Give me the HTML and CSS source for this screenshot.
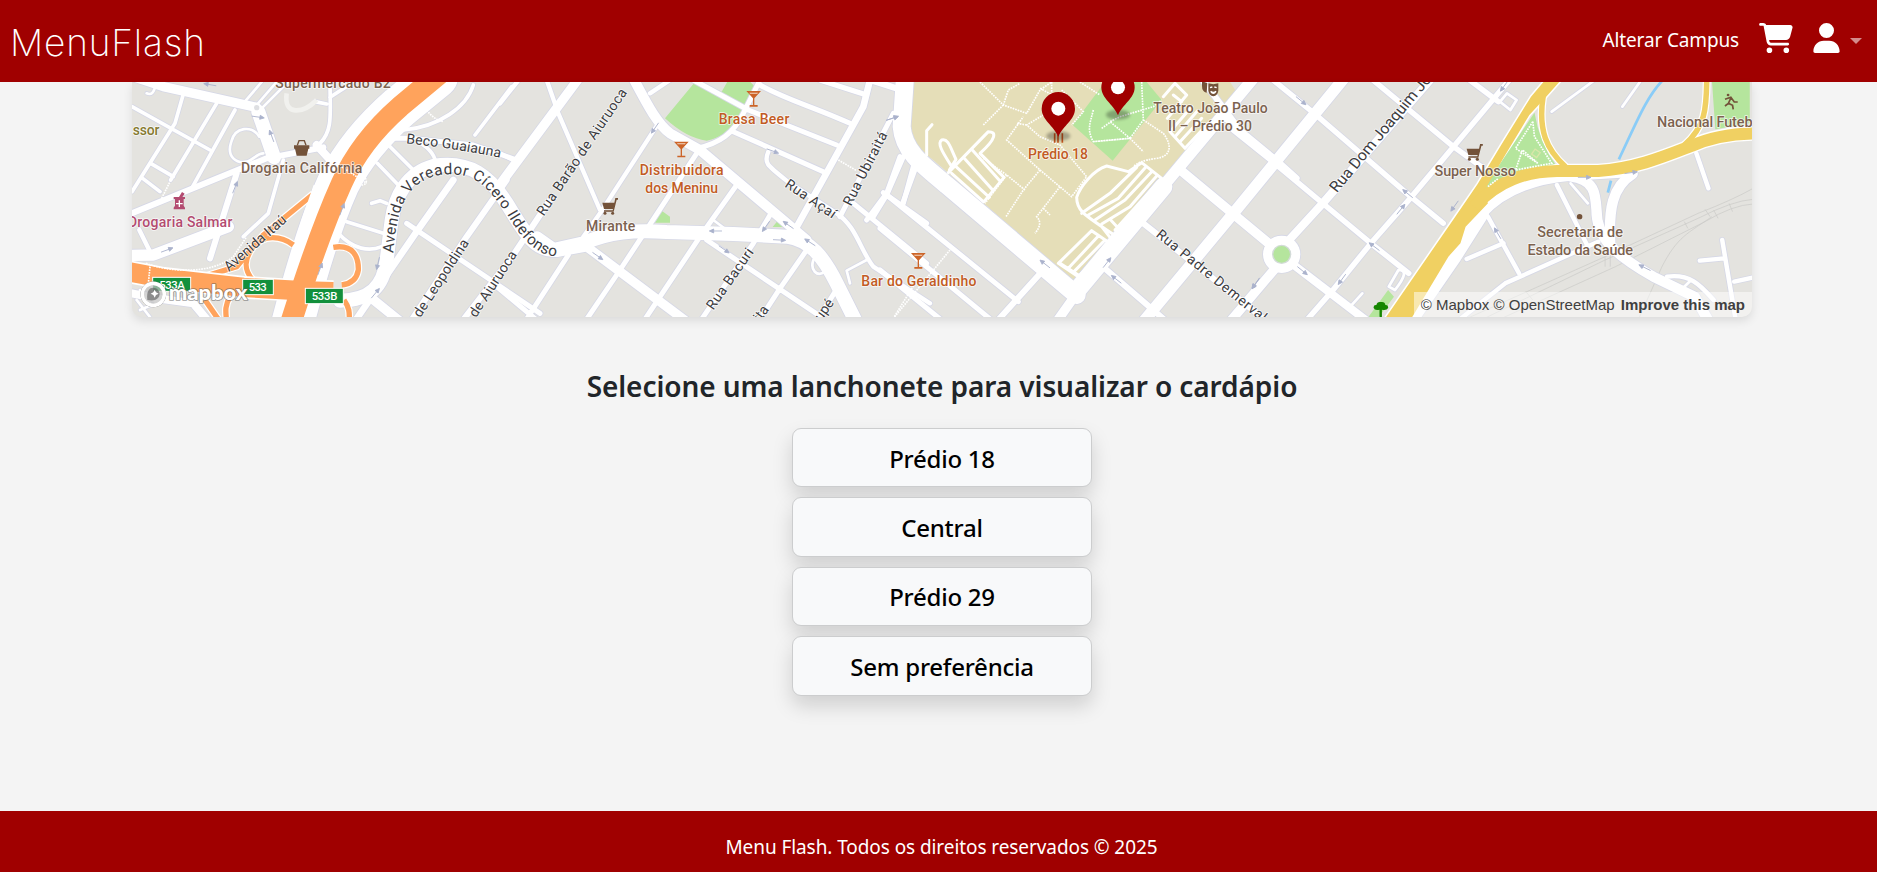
FILE: index.html
```html
<!DOCTYPE html>
<html lang="pt-BR">
<head>
<meta charset="utf-8">
<title>MenuFlash</title>
<link rel="stylesheet" href="styles.css">
</head>
<body>
<header class="topbar">
  <a class="brand">MenuFlash</a>
  <nav class="nav">
    <a class="campus">Alterar Campus</a>
    <svg class="cart" viewBox="0 0 576 512"><path d="M0 24C0 10.7 10.7 0 24 0H69.5c22 0 41.5 12.8 50.6 32h411c26.3 0 45.5 25 38.6 50.4l-41 152.3c-8.5 31.4-37 53.3-69.5 53.3H170.7l5.4 28.5c2.2 11.3 12.1 19.5 23.6 19.5H488c13.3 0 24 10.7 24 24s-10.7 24-24 24H199.7c-34.6 0-64.3-24.6-70.7-58.5L77.4 54.5c-.7-3.8-4-6.5-7.9-6.5H24C10.7 48 0 37.3 0 24zM128 464a48 48 0 1 1 96 0 48 48 0 1 1 -96 0zm336-48a48 48 0 1 1 0 96 48 48 0 1 1 0-96z"/></svg>
    <svg class="user" viewBox="0 0 448 512"><path d="M224 256A128 128 0 1 0 224 0a128 128 0 1 0 0 256zm-45.7 48C79.8 304 0 383.8 0 482.3C0 498.7 13.3 512 29.7 512H418.3c16.4 0 29.7-13.3 29.7-29.7C448 383.8 368.2 304 269.7 304H178.3z"/></svg>
    <span class="caret"></span>
  </nav>
</header>
<main class="content">
  <section class="map">
  <svg class="map-canvas" viewBox="132 82 1620 235" width="1620" height="235">
    <defs>
      <path id="arrow" d="M-19 0H8M6 -6L19 0L6 6Z"/>
      <g id="glass"><path d="M-22 -24H22L2 -2V18H12V23H-12V18H-2V-2Z"/><path class="hole" d="M-13 -19H13L11 -16H-11Z"/></g>
      <g id="trolley"><path d="M-23 -11H13L16 -25H24V-20H20L11 16H-18V12H8L9 8H-18Z"/><circle cx="-15" cy="21" r="4.5"/><circle cx="8" cy="21" r="4.5"/></g>
      <g id="pin"><ellipse class="pin-shadow" cx="0" cy="-2" rx="36" ry="15"/><path d="M0 0C-14 -34 -50 -50 -50 -84A50 50 0 0 1 50 -84C50 -50 14 -34 0 0Z"/><circle class="dot" cx="0" cy="-84" r="21"/></g>

      <g id="streets-west">
        <path class="w28" d="M40 20L130 50L410 112"/>
        <path class="w8" d="M80 70C105 80 100 50 118 30M410 105L475 30M428 112L510 30M370 100L425 36"/>
        <path class="w40" d="M415 125L462 262"/>
        <path class="w10" d="M36 110L270 240M192 65L165 160L36 365M290 100L152 330M345 120L215 355M92 280L160 320M68 325L120 365"/>
        <path class="w8" d="M418 200C395 165 345 170 334 215C318 262 350 282 382 275C405 265 412 250 430 250"/>
        <path class="w18" d="M30 432L340 305L440 265L610 232M350 310L270 565"/>
        <path class="w10" d="M490 270L445 430L370 500M630 30C630 130 640 180 600 220M630 82L710 30M585 95L620 102"/>
        <path class="w34" d="M325 470L100 555L30 556"/>
        <path class="w12" d="M58 480L95 555"/>
        <path class="w24" d="M590 225L640 280M36 670L110 685L220 700L270 760"/>
        <path class="w8" d="M50 690L90 741M60 720L130 690M90 700L60 660"/>
        <path class="w120" d="M950 20L840 110C760 180 700 250 655 340C610 440 570 560 518 760"/>
        <path class="w10" d="M655 490C700 540 750 545 785 530M680 455L790 490M755 400L780 392L800 400M1060 45C1040 110 960 170 850 180M1175 50L1065 195M870 205C910 220 935 240 945 268M805 225L895 315M772 280L840 350"/>
        <path class="w14" d="M800 205L870 205L1060 225L1190 270M860 460L1260 730"/>
        <path class="w20" d="M690 775L890 485L1000 330"/>
        <path class="w18" d="M865 765L1040 500L1160 330M1010 775L1180 555L1290 390"/>
        <path class="w28" d="M1135 350L1380 20M755 685L860 770"/>
        <path class="w40" d="M660 692C750 690 790 650 800 570L815 450C825 380 860 310 940 288C1050 270 1110 320 1160 400C1210 480 1240 545 1310 540L1390 525"/>
      </g>
      <g id="streets-mid">
        <path class="w12" d="M0 100L60 25M140 30L175 130L300 420M0 250L50 275M450 70L510 30M475 160L300 430L250 500"/>
        <path class="w30" d="M400 25C440 100 470 160 510 190L600 240L920 510"/>
        <path class="w14" d="M580 30L745 120M590 235C660 220 700 190 730 130L780 30M745 120L1010 225M780 45C860 90 940 110 1050 160M960 30L1100 75M1120 30L1210 60M700 185L970 305"/>
        <path class="w20" d="M1110 30L1090 110L885 480"/>
        <path class="w12" d="M805 245C790 280 800 285 870 340L1010 430C1070 470 1080 540 1120 590L1290 700"/>
        <path class="w14" d="M590 250L360 600L255 755M710 345L600 500L430 755M810 435L760 520L600 755M920 540L840 655L775 755M205 555L75 755M620 510L970 745M-10 650L110 750M1180 130L1020 440M1200 260L1160 370L1100 450M1240 290L1210 400M1150 368L1280 460M1060 400L1280 580M1015 650L955 745"/>
        <path class="w8" d="M640 450L680 480M1100 570L1040 602L1050 640M940 570C930 600 950 622 975 605"/>
        <path class="w28" d="M260 530L560 755"/>
        <path class="w40" d="M110 505L160 540L250 520C330 485 400 480 500 486L700 492L860 500C930 510 970 560 1010 640L1075 770"/>
      </g>
      <g id="streets-campus">
        <path class="w52" d="M75 20L65 170C70 240 120 280 200 345L590 675"/>
        <path class="w52" d="M590 662L850 350"/>
        <path class="w34" d="M840 360L1120 25M1060 430L790 755M1060 430L1400 15"/>
        <path class="w28" d="M590 670L530 755M895 295L1190 540M1190 590L1050 755"/>
        <path class="w18" d="M960 20L1080 180L1195 275M1030 140L1200 280L1250 325M790 460L1150 745M680 600L860 755M490 600L350 755"/>
        <path class="w14" d="M20 375L415 695M0 475L340 755M0 600L190 755M70 260L20 375L-20 440M108 290L68 400M-20 35L60 60"/>
        <circle class="ring" cx="1205" cy="553" r="56"/>
      </g>
      <g id="streets-east">
        <path class="w24" d="M560 20L240 400L125 530M150 580L390 770"/>
        <path class="w16" d="M790 20L620 230L490 390L380 520L270 660L190 755M-20 180L95 275L240 400L380 520L490 610M90 25L215 130L490 375L590 460M380 25L620 230L700 290M660 25L750 95"/>
        <path class="w46" d="M700 430L620 560L480 770"/>
        <path class="w34" d="M700 430C760 360 850 325 960 315L1130 305"/>
        <path class="w30" d="M960 320C1030 330 1032 370 1035 420C1035 500 1080 550 1200 620L1320 680L1370 770M1140 312C1080 350 1070 420 1075 520"/>
        <path class="w12" d="M720 440L810 610M658 567L765 520M630 755L770 640L1040 515M920 345L1010 530M1325 250L1360 355M1400 510L1440 755M1335 572L1405 565M1435 635L1500 620M1240 620C1310 610 1340 650 1375 690"/>
        <path class="w8" d="M960 340L1010 400M905 125L1030 30M1110 110L1165 30M755 95L775 70L803 90L785 120ZM432 650L460 600C485 600 480 620 450 660L432 650M355 670L320 710M1280 660L1310 630"/>
      </g>
      <path id="curve-vereador" d="M820 550C830 420 855 335 960 315C1080 300 1110 370 1160 430C1200 500 1245 562 1325 560L1400 552"/>
      <path id="curve-guaiauna" d="M858 220Q1010 236 1145 264"/>
    </defs>

    <g transform="translate(880 70) scale(.33333)">
      <path class="campus-area" d="M80 20L80 160Q100 230 160 270L590 640L850 320L1085 90L1040 20Z"/>
      <path class="park" d="M675 36L578 165L698 272L845 90L800 36Z"/>
    </g>
    <g transform="translate(500 70) scale(.33333)">
      <path class="park" d="M585 36L495 145Q560 205 620 212Q680 200 725 140L765 50L745 30H685L665 65L590 30ZM465 458L485 422L510 440V458Z"/>
    </g>
    <g transform="translate(1240 70) scale(.34444 .33333)">
      <path class="park" d="M1370 30H1480V160L1380 178ZM430 660L447 680L400 745H370Z"/>
      <path class="rail" d="M660 745L1060 560L1330 430Q1430 390 1490 355M700 750L1060 570L1330 445Q1430 392 1490 388M760 745L1090 590L1350 455Q1430 405 1490 402M1160 741L1225 590C1270 500 1300 490 1370 440M1060 560V590M1075 555V590M1290 455L1300 475M1350 418L1365 440M1375 420L1388 445M1420 400L1430 425M830 665L850 690"/>
    </g>

    <g class="casing">
      <use href="#streets-west" transform="translate(120 70) scale(.33333)"/>
      <use href="#streets-mid" transform="translate(500 70) scale(.33333)"/>
      <use href="#streets-campus" transform="translate(880 70) scale(.33333)"/>
      <use href="#streets-east" transform="translate(1240 70) scale(.34444 .33333)"/>
    </g>
    <g class="surface">
      <use href="#streets-west" transform="translate(120 70) scale(.33333)"/>
      <use href="#streets-mid" transform="translate(500 70) scale(.33333)"/>
      <use href="#streets-campus" transform="translate(880 70) scale(.33333)"/>
      <use href="#streets-east" transform="translate(1240 70) scale(.34444 .33333)"/>
    </g>

    <g transform="translate(120 70) scale(.33333)">
      <path class="faint" d="M500 70C490 140 550 130 590 90"/>
      <circle class="island" cx="410" cy="113" r="8"/>
      <g class="ramp-edge"><path d="M580 372L430 495L350 590L245 622M520 525C480 495 430 495 400 530C370 570 372 600 398 630M640 532C700 522 716 560 715 600C710 630 690 642 665 645M255 690L300 755M330 680C312 710 318 730 320 755M672 690C690 715 688 730 688 755"/></g>
      <g class="ramp"><path d="M580 372L430 495L350 590L245 622M520 525C480 495 430 495 400 530C370 570 372 600 398 630M640 532C700 522 716 560 715 600C710 630 690 642 665 645M255 690L300 755M330 680C312 710 318 730 320 755M672 690C690 715 688 730 688 755"/></g>
      <path class="motorway-side" d="M598 350L560 460L525 590"/>
      <path class="avenue-edge" d="M25 605L130 625L370 652L560 663L640 665"/>
      <path class="avenue" d="M25 605L130 625L370 652L560 663L640 665"/>
      <path class="motorway" d="M960 10L840 110C760 180 705 250 665 340C620 440 575 560 512 760"/>
      <path class="footway" d="M78 580C160 610 280 610 340 560L380 500M90 590L85 640M125 385L155 325M920 120C935 140 950 150 970 155M665 210L635 270L740 340"/>
      <circle class="footway" cx="727" cy="333" r="12"/>
      <g class="arrows">
        <use href="#arrow" transform="translate(270 44) rotate(190)"/><use href="#arrow" transform="translate(414 141) rotate(8)"/>
        <use href="#arrow" transform="translate(455 198) rotate(-110)"/><use href="#arrow" transform="translate(345 352) rotate(-68)"/>
        <use href="#arrow" transform="translate(141 540) rotate(-20)"/><use href="#arrow" transform="translate(666 418) rotate(-70)"/>
        <use href="#arrow" transform="translate(600 597) rotate(-70)"/><use href="#arrow" transform="translate(774 580) rotate(103)"/>
        <use href="#arrow" transform="translate(766 670) rotate(-50)"/>
      </g>
    </g>

    <g transform="translate(500 70) scale(.33333)">
      <path class="park" d="M818 471L830 456L847 471Z"/>
      <path class="footway" d="M1015 270L1070 302M1245 640L1180 745"/>
      <g class="arrows">
        <use href="#arrow" transform="translate(465 174) rotate(125)"/><use href="#arrow" transform="translate(818 243) rotate(20)"/>
        <use href="#arrow" transform="translate(798 469) rotate(125)"/><use href="#arrow" transform="translate(865 465) rotate(215)"/>
        <use href="#arrow" transform="translate(930 517) rotate(213)"/><use href="#arrow" transform="translate(838 510) rotate(3)"/>
        <use href="#arrow" transform="translate(647 483) rotate(180)"/><use href="#arrow" transform="translate(672 538) rotate(35)"/>
        <use href="#arrow" transform="translate(293 558) rotate(35)"/><use href="#arrow" transform="translate(1177 145) rotate(-18)"/>
      </g>
    </g>

    <g transform="translate(880 70) scale(.33333)">
      <circle class="round-park" cx="1205" cy="553" r="27"/>
      <g class="lot">
        <path d="M205 308L325 185C350 185 350 205 300 250L372 322L312 395M275 238L362 335M250 262L340 362M228 290L328 382M215 310L310 395M208 300L228 268C210 230 205 205 185 210C170 220 190 250 212 285M140 255V182L156 164"/>
        <path d="M745 305L680 288C640 300 600 350 590 382C590 425 615 435 710 500M745 305L785 278L845 325L705 480M770 292L690 370L605 430M797 292L715 385L625 435M815 305L735 390L645 450M830 318L750 410L665 462M690 448L725 485M665 470L700 515"/>
        <path d="M535 580L635 482L690 520L595 620ZM655 498L565 595M675 510L582 605M540 580L595 615"/>
        <path d="M850 80L885 40L920 75L862 145M880 75L905 95M870 185L915 235L985 160M885 200L950 125M900 215L965 145M870 185L935 110"/>
      </g>
      <path class="footway" d="M300 36L370 105L440 130L480 60L515 36M370 105L310 165M370 105L385 60L420 40M515 36V120L440 165L480 200L540 225L620 320L575 380L480 300L380 210L430 140M480 300L430 360L378 440M440 165L410 160M545 60L610 125L575 165M480 55L545 90M310 265L380 315L435 360M540 350L470 440Q490 460 465 490M490 415L510 435M600 36L660 75M380 315L315 400M640 120C630 160 620 180 640 215L750 205L690 155L720 140L820 110L845 90M785 36L790 150L750 205L640 215M665 175L700 150M790 150L850 190C880 230 870 260 830 265C790 270 770 280 760 290M750 205L790 245M210 540L40 745"/>
      <path class="fork" d="M524 190V218M534 195V218M547 190V218"/>
      <g class="arrows">
        <use href="#arrow" transform="translate(37 145) rotate(-18)"/><use href="#arrow" transform="translate(495 582) rotate(218)"/>
        <use href="#arrow" transform="translate(681 578) rotate(-52)"/><use href="#arrow" transform="translate(709 628) rotate(218)"/>
        <use href="#arrow" transform="translate(1127 641) rotate(125)"/>
      </g>
    </g>

    <g transform="translate(1240 70) scale(.34444 .33333)">
      <path class="water" d="M1228 30C1180 80 1150 160 1100 268M1077 332L1068 368"/>
      <g class="yellow-edge"><path class="slim" d="M880 80C865 180 890 240 945 290M1355 20C1355 120 1350 170 1290 225"/><path class="broad" d="M886 30L845 80L760 222L690 342L625 440L415 755H492L605 560L640 520L655 470L720 400L705 370L770 255L840 135L885 85L932 30Z"/><path class="medium" d="M680 410C750 330 830 305 920 303H1040C1150 295 1230 260 1310 228C1370 200 1430 190 1500 190"/></g>
      <path class="park" d="M855 128L700 365Q800 300 915 282Q870 220 855 128Z"/>
      <g class="yellow"><path class="slim" d="M880 80C865 180 890 240 945 290M1355 20C1355 120 1350 170 1290 225"/><path class="broad" d="M886 30L845 80L760 222L690 342L625 440L415 755H492L605 560L640 520L655 470L720 400L705 370L770 255L840 135L885 85L932 30Z"/><path class="medium" d="M680 410C750 330 830 305 920 303H1040C1150 295 1230 260 1310 228C1370 200 1430 190 1500 190"/></g>
      <path class="footway" d="M850 155L855 200L905 280L800 300L820 240L860 275M850 155L800 235L865 280M720 350L750 325"/>
      <rect class="plot" x="850" y="241" width="18" height="18" transform="rotate(35 859 250)"/>
      <g class="arrows">
        <use href="#arrow" transform="translate(177 92) rotate(40)"/><use href="#arrow" transform="translate(767 48) rotate(125)"/>
        <use href="#arrow" transform="translate(623 408) rotate(125)"/><use href="#arrow" transform="translate(487 371) rotate(220)"/>
        <use href="#arrow" transform="translate(467 418) rotate(-52)"/><use href="#arrow" transform="translate(390 530) rotate(218)"/>
        <use href="#arrow" transform="translate(181 602) rotate(40)"/><use href="#arrow" transform="translate(296 628) rotate(125)"/>
        <use href="#arrow" transform="translate(46 639) rotate(125)"/><use href="#arrow" transform="translate(748 490) rotate(-120)"/>
        <use href="#arrow" transform="translate(1175 593) rotate(207)"/><use href="#arrow" transform="translate(1000 322)"/><use href="#arrow" transform="translate(1135 308) rotate(-8)"/>
      </g>
    </g>

    <g class="labels" transform="translate(120 70) scale(.33333)">
      <text class="shop" x="466" y="53" textLength="346">Supermercado B2</text>
      <text class="school" x="38" y="194" textLength="80">ssor</text>
      <g class="shop"><path d="M522 226H568V236H565L560 257H530L525 236H522Z"/><path class="handle" d="M532 226L537 212H553L558 226"/></g>
      <text class="shop" x="363" y="308" textLength="364">Drogaria Califórnia</text>
      <g class="pharmacy"><path d="M161 381H177L186 366L194 371L187 381H195V387H191V407L195 413V418H161V413L165 407V387H161Z"/><path class="plus" d="M178 391V411M168 401H188"/></g>
      <text class="pharmacy" x="24" y="470" textLength="313">Drogaria Salmar</text>
      <text class="road" textLength="286"><textPath href="#curve-guaiauna">Beco Guaiauna</textPath></text>
      <text class="road big spaced"><textPath href="#curve-vereador">Avenida Vereador Cícero Ildefonso</textPath></text>
      <text class="road" transform="translate(327 606) rotate(-41)" textLength="232">Avenida Itaú</text>
      <text class="road" transform="translate(901 745) rotate(-57)" textLength="270">de Leopoldina</text>
      <text class="road" transform="translate(1068 745) rotate(-57)" textLength="228">de Aiuruoca</text>
      <g class="shield"><rect x="98" y="622" width="114" height="42"/><rect x="368" y="628" width="92" height="46"/><rect x="556" y="655" width="114" height="46"/>
        <text x="118" y="656" textLength="76">533A</text><text x="386" y="663" textLength="54">533</text><text x="575" y="690" textLength="77">533B</text></g>
      <g class="mapbox">
        <circle class="mb-ring" cx="100" cy="673" r="33"/><path class="mb-leaf" d="M82 690C78 655 95 650 108 655C124 664 122 684 105 690C97 692 90 691 82 690Z"/><path class="mb-star" d="M104 659L108 667L116 671L108 675L104 683L100 675L92 671L100 667Z"/>
        <text x="146" y="690" textLength="236" lengthAdjust="spacingAndGlyphs">mapbox</text>
      </g>
    </g>
    <g class="labels" transform="translate(500 70) scale(.33333)">
      <use class="bar" href="#glass" x="761" y="87"/><text class="bar" x="656" y="163" textLength="212">Brasa Beer</text>
      <use class="bar" href="#glass" x="544" y="239"/><text class="bar" x="419" y="315" textLength="252">Distribuidora</text><text class="bar" x="436" y="369" textLength="218">dos Meninu</text>
      <use class="shop" href="#trolley" x="330" y="409"/><text class="shop" x="258" y="484" textLength="148">Mirante</text>
      <text class="road" transform="translate(131 440) rotate(-56)" textLength="450">Rua Barão de Aiuruoca</text>
      <text class="road" transform="translate(852 349) rotate(34)" textLength="175">Rua Açaí</text>
      <text class="road" transform="translate(1053 410) rotate(-63)" textLength="242">Rua Ubiraitá</text>
      <text class="road" transform="translate(640 722) rotate(-55)" textLength="214">Rua Bacuri</text>
      <text class="road" transform="translate(781 757) rotate(-55)">ita</text>
      <text class="road" transform="translate(964 755) rotate(-55)">upé</text>
    </g>
    <g class="labels" transform="translate(880 70) scale(.33333)">
      <use class="bar" href="#glass" x="115" y="573"/><text class="bar" x="-56" y="649" textLength="345">Bar do Geraldinho</text>
      <text class="bar" x="444" y="267" textLength="180">Prédio 18</text>
      <g class="shop"><path d="M966 34L982 39L980 68Q966 65 966 48Z"/><path d="M985 40Q1000 45 1015 40V62Q1013 76 1000 79Q987 76 985 62Z"/><path class="plus" d="M990 53L997 51M1003 51L1010 53M992 64Q1000 70 1008 64Q1000 76 992 64"/></g>
      <text class="shop" x="820" y="130" textLength="343">Teatro João Paulo</text><text class="shop" x="864" y="184" textLength="252">II – Prédio 30</text>
      <text class="road" transform="translate(826 498) rotate(39)" textLength="412">Rua Padre Demerval</text>
      <use class="pin" href="#pin" x="535" y="200"/><use class="pin" href="#pin" x="714" y="136"/>
    </g>
    <g class="labels" transform="translate(1240 70) scale(.34444 .33333)">
      <text class="road big" transform="translate(281 370) rotate(-51)" textLength="488">Rua Dom Joaquim José</text>
      <use class="shop" href="#trolley" x="681" y="247"/><text class="shop" x="565" y="319" textLength="236">Super Nosso</text>
      <circle class="shop" cx="986" cy="440" r="8"/><text class="shop" x="863" y="501" textLength="249">Secretaria de</text><text class="shop" x="835" y="555" textLength="306">Estado da Saúde</text>
      <circle class="shop" cx="1417" cy="75" r="4"/><path class="runner" d="M1408 88L1425 82L1435 96H1445M1425 84L1418 100L1430 106L1432 118M1418 100L1408 108"/>
      <text class="shop" x="1211" y="171" textLength="277">Nacional Futeb</text>
      <path class="tree" d="M388 714Q387 704 396 705Q398 694 409 696Q421 694 422 705Q431 704 430 714Q426 722 412 719V745H405V719Q392 723 388 714Z"/>
    </g>
  </svg>
  <div class="attribution"><span>© Mapbox</span> <span>© OpenStreetMap</span> <strong>Improve this map</strong></div>
  </section>
  <h1 class="title"><span>Selecione uma lanchonete para visualizar o cardápio</span></h1>
  <div class="options">
    <button class="option">Prédio 18</button>
    <button class="option">Central</button>
    <button class="option">Prédio 29</button>
    <button class="option">Sem preferência</button>
  </div>
</main>
<footer class="footer">Menu Flash. Todos os direitos reservados © 2025</footer>
</body>
</html>
```
FILE: styles.css
```css
* { box-sizing: border-box; }
body { margin: 0; height: 872px; overflow: hidden; display: flex; flex-direction: column; background: #f4f4f4; font-family: "Noto Sans", "Open Sans", sans-serif; }

.topbar { height: 82px; flex: none; background: #a00000; color: #fff; display: flex; justify-content: space-between; padding: 0 15px 0 10px; }
.brand { font: 250 37px/86px Inter, Lato, sans-serif; letter-spacing: .85px; }
.nav { display: flex; align-items: center; padding-bottom: 6px; }
.campus { font-size: 19px; letter-spacing: -.15px; margin: 4px 20px 0 0; }
.cart { width: 34px; height: 30px; fill: #fff; margin-right: 20px; }
.user { width: 27px; height: 30px; fill: #fff; margin-right: 10px; }
.caret { border: 6px solid transparent; border-top-color: rgba(255, 255, 255, .55); border-bottom: 0; margin-top: 6px; }

.content { flex: 1; padding-left: 7px; display: flex; flex-direction: column; align-items: center; }
.map { width: 1620px; height: 235px; flex: none; background: #e4e3df; border-radius: 0 0 10px 10px; overflow: hidden; box-shadow: 0 4px 10px rgba(0, 0, 0, .1); display: grid; }
.map-canvas, .attribution { grid-area: 1 / 1; }
.attribution { align-self: end; justify-self: end; width: 338px; height: 25px; background: rgba(255, 255, 255, .5); color: #404040; font: 15px/25px "Liberation Sans", Arial, sans-serif; text-align: right; padding-right: 7px; white-space: nowrap; }
.attribution strong { margin-left: 2px; }

.title { margin: 48px 0 0; height: 42px; font-size: 28px; line-height: 42px; font-weight: 600; letter-spacing: -.08px; color: #212529; white-space: nowrap; }
.options { margin-top: 21px; display: grid; grid-template-columns: 300px; grid-auto-rows: 59.4px; gap: 10px; }
.option { padding: 1px 0 0; border: 1px solid #cccdce; border-radius: 9px; background: #f8f9fa; box-shadow: 0 10px 20px rgba(0, 0, 0, .15); color: #000; font: 500 24px "Noto Sans", sans-serif; letter-spacing: -.25px; }
.footer { height: 61px; flex: none; background: #a00000; color: #fff; text-align: center; font-size: 19px; line-height: 72px; letter-spacing: -.08px; padding-left: 6px; }

.casing, .surface { fill: none; stroke-linecap: round; stroke-linejoin: round; }
.casing { stroke: #d6d8e6; --edge: 5px; }
.surface { stroke: #fff; --edge: 0px; }
.w8 { stroke-width: calc(8px + var(--edge)); }
.w10 { stroke-width: calc(11px + var(--edge)); }
.w12 { stroke-width: calc(13px + var(--edge)); }
.w14 { stroke-width: calc(15px + var(--edge)); }
.w16 { stroke-width: calc(16px + var(--edge)); }
.w18 { stroke-width: calc(18px + var(--edge)); }
.w20 { stroke-width: calc(20px + var(--edge)); }
.w24 { stroke-width: calc(24px + var(--edge)); }
.w28 { stroke-width: calc(28px + var(--edge)); }
.w30 { stroke-width: calc(30px + var(--edge)); }
.w34 { stroke-width: calc(34px + var(--edge)); }
.w40 { stroke-width: calc(42px + var(--edge)); }
.w46 { stroke-width: calc(46px + var(--edge)); }
.w52 { stroke-width: calc(54px + var(--edge)); }
.w120 { stroke-width: calc(128px + var(--edge)); }
.ring { stroke-width: var(--edge); fill: #fff; }

.campus-area { fill: #e5deb8; }
.park { fill: #b5e59d; }
.rail { fill: none; stroke: #c9c9c7; stroke-width: 2; }
.faint { fill: none; stroke: #f1f1ee; stroke-width: 14; }
.island { fill: #dedfe2; }
.ramp-edge, .ramp, .avenue-edge, .avenue, .motorway, .motorway-side, .yellow, .yellow-edge { fill: none; stroke-linejoin: round; }
.ramp-edge { stroke: #fff; stroke-width: 23; }
.ramp { stroke: #ffa35c; stroke-width: 16; }
.motorway-side { stroke: #fff; stroke-width: 36; }
.avenue-edge { stroke: #fff; stroke-width: 68; }
.avenue { stroke: #ffa35c; stroke-width: 58; }
.motorway { stroke: #ffa35c; stroke-width: 64; }
.footway { fill: none; stroke: #fff; stroke-width: 5; stroke-dasharray: 5 3; }
.lot { fill: none; stroke: #fff; stroke-width: 9; stroke-linejoin: round; stroke-linecap: round; }
.fork { stroke: #c9581f; stroke-width: 5; fill: none; }
.round-park { fill: #b5e59d; stroke: #d3dbd8; stroke-width: 4; }
.water { fill: none; stroke: #8accf7; stroke-width: 8; }
.yellow { stroke: #f0d062; }
.yellow-edge { stroke: #fff; }
.yellow .slim { stroke-width: 16; }
.yellow .broad { fill: #f0d062; stroke: none; }
.yellow .medium { stroke-width: 36; }
.yellow-edge .slim { stroke-width: 23; }
.yellow-edge .broad { stroke-width: 9; }
.yellow-edge .medium { stroke-width: 44; }
.plot { fill: #b5e59d; stroke: #d8e6a9; stroke-width: 4; }
.arrows { fill: #aab2cc; stroke: #aab2cc; stroke-width: 2.5; }

.labels text { font: 500 42px Roboto, sans-serif; paint-order: stroke; stroke: rgba(255, 255, 255, .75); stroke-width: 5px; stroke-linejoin: round; }
.labels .road { fill: #3c3c3f; font-weight: 400; }
.labels .big { font-size: 46px; }
.labels .spaced { letter-spacing: 1.4px; }
.shop { fill: #735239; }
.labels text.shop { fill: #7c624f; }
.school { fill: #867a32; }
.bar { fill: #cc6428; }
.labels text.bar { fill: #c25b24; }
.pharmacy { fill: #b34b70; }
.handle { fill: none; stroke: #735239; stroke-width: 4; }
.plus { fill: none; stroke: #fff; stroke-width: 4; }
.hole { fill: #f3d8c5; }
.runner { fill: none; stroke: #735239; stroke-width: 5; }
.tree { fill: #158600; }
.shield rect { fill: #12903c; stroke: #fff; stroke-width: 3; }
.labels .shield text { fill: #fff; stroke: none; font-size: 34px; }
.mb-ring { fill: rgba(255, 255, 255, .45); stroke: #fff; stroke-width: 11; filter: drop-shadow(0 0 2px #555); }
.mb-leaf { fill: rgba(80, 80, 80, .55); }
.mb-star { fill: #fff; }
.labels .mapbox text { fill: #fff; font: 900 60px Lato, sans-serif; stroke: rgba(90, 90, 90, .6); stroke-width: 5px; }
.pin { fill: #a00000; }
.dot { fill: #fff; }
.pin-shadow { fill: #000; opacity: .28; filter: blur(5px); }
```
